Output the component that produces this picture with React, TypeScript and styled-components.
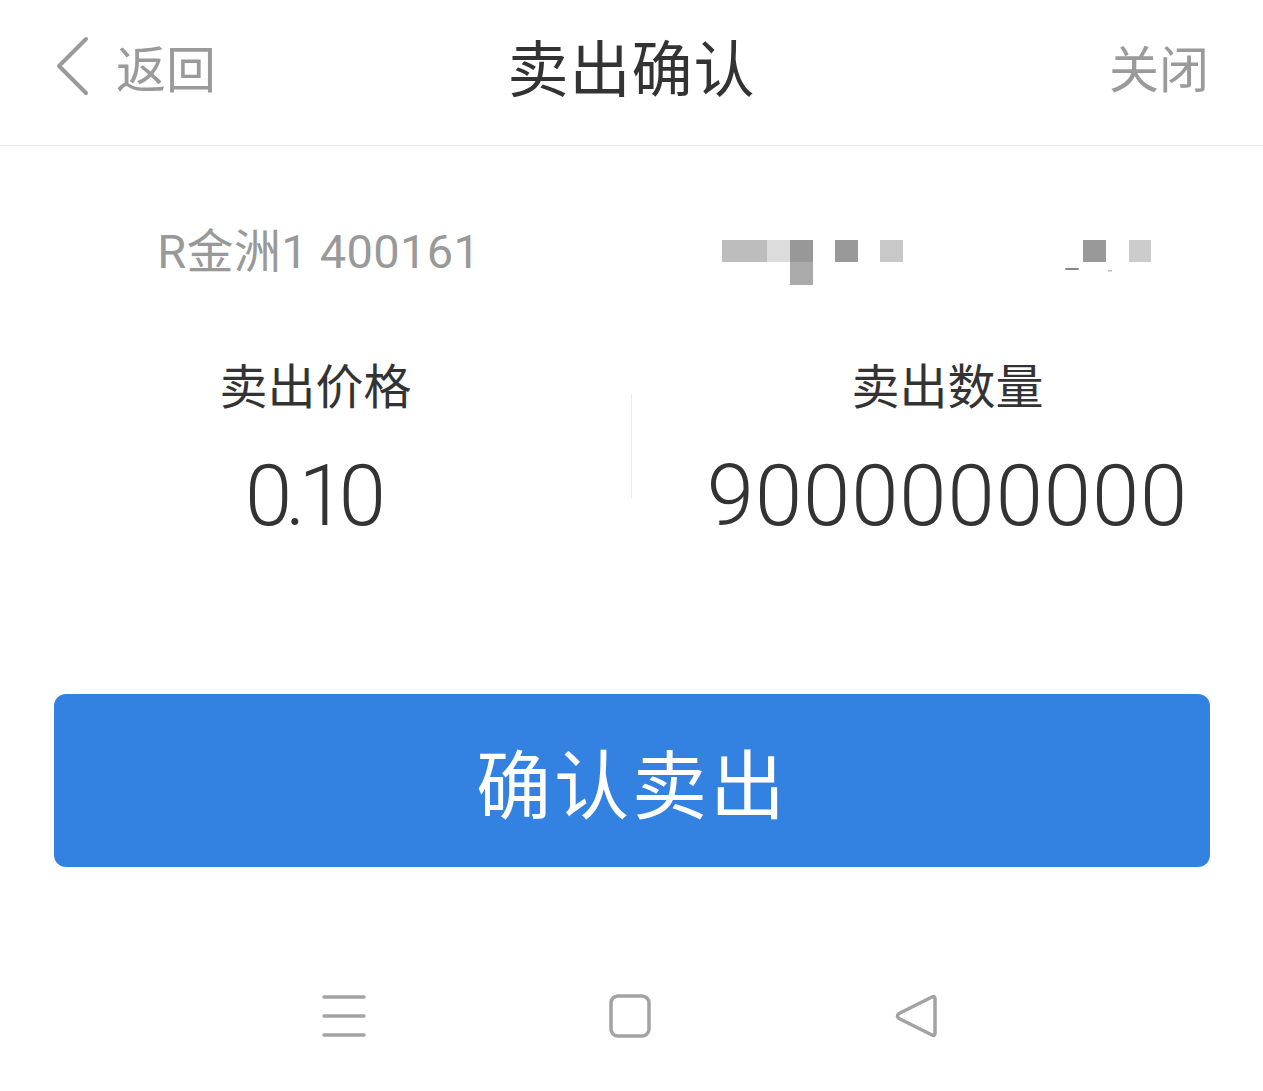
import React from "react";
import styled, { createGlobalStyle } from "styled-components";

const GlobalStyle = createGlobalStyle`
  html, body {
    margin: 0;
    padding: 0;
    background: #ffffff;
  }
  body {
    font-family: Roboto, "Noto Sans CJK SC", sans-serif;
  }
`

const Page = styled.div`
  width: 1263px;
  height: 1091px;
  display: flex;
  flex-direction: column;
  background: #fff;
  overflow: hidden;
`

const Header = styled.header`
  height: 146px;
  box-sizing: border-box;
  display: grid;
  grid-template-columns: 1fr auto 1fr;
  align-items: center;
  padding: 0 54px 14px;
  border-bottom: 1px solid #ededed;
`

const BackLink = styled.button`
  display: flex;
  align-items: center;
  gap: 26px;
  border: none;
  background: none;
  padding: 0;
  color: #9a9a9a;
  font-family: Roboto, "Noto Sans CJK SC", sans-serif;
  font-size: 50px;
  justify-self: start;
  cursor: pointer;
`

const Title = styled.h1`
  margin: 0;
  font-size: 61px;
  font-weight: 400;
  color: #333;
  letter-spacing: 1px;
`

const CloseLink = styled.button`
  justify-self: end;
  border: none;
  background: none;
  padding: 0;
  color: #9a9a9a;
  font-family: Roboto, "Noto Sans CJK SC", sans-serif;
  font-size: 50px;
  cursor: pointer;
`

const InfoRow = styled.div`
  display: grid;
  grid-template-columns: 1fr 1fr;
  height: 192px;
  align-items: center;
`

const StockName = styled.div`
  text-align: center;
  font-size: 47px;
  color: #999;
  letter-spacing: 0.3px;
  padding-top: 10px;
  padding-left: 6px;
`

const MosaicCell = styled.div`
  display: flex;
  align-items: center;
  padding-left: 90px;
  padding-top: 46px;
`

const Columns = styled.div`
  display: grid;
  grid-template-columns: 1fr 1px 1fr;
  align-items: center;
  height: 215px;
`

const Column = styled.div`
  display: flex;
  flex-direction: column;
  align-items: center;
  gap: 28px;
  padding-top: 12px;
`

const Divider = styled.div`
  width: 1px;
  height: 105px;
  background: #ececec;
  margin-top: 2px;
`

const Label = styled.div`
  font-size: 48px;
  color: #333;
  line-height: 60px;
`

const Value = styled.div<{ $tight?: boolean }>`
  font-size: 85px;
  font-weight: 300;
  color: #333;
  line-height: 100px;
  letter-spacing: ${({ $tight }) => ($tight ? "-7px" : "1px")};
  margin-right: ${({ $tight }) => ($tight ? "7px" : "0")};
`

const ButtonWrap = styled.div`
  padding: 141px 53px 0 54px;
`

const ConfirmButton = styled.button`
  width: 100%;
  height: 173px;
  border: none;
  border-radius: 12px;
  background: #3381e0;
  color: #fff;
  font-family: Roboto, "Noto Sans CJK SC", sans-serif;
  font-size: 75px;
  letter-spacing: 3px;
  padding-top: 0;
  cursor: pointer;
`

const NavBar = styled.nav`
  margin-top: auto;
  height: 150px;
  display: flex;
  justify-content: center;
  align-items: center;
  gap: 242px;
  padding-right: 4px;
`

const NavIcon = styled.svg`
  display: block;
`

const Chevron = () => (
  <svg width="36" height="60" viewBox="0 0 36 60">
    <path d="M32 3 L5 30 L32 57" fill="none" stroke="#9a9a9a" strokeWidth="4" strokeLinecap="round" strokeLinejoin="round" />
  </svg>
)

// pixelated (mosaic) account number
const Mosaic = () => (
  <svg width="440" height="50" viewBox="0 0 440 50">
    <rect x="0" y="0" width="45" height="22" fill="#bdbdbd" />
    <rect x="45" y="0" width="23" height="22" fill="#dcdcdc" />
    <rect x="68" y="0" width="23" height="22" fill="#989898" />
    <rect x="68" y="22" width="23" height="23" fill="#aaaaaa" />
    <rect x="113" y="0" width="23" height="22" fill="#999999" />
    <rect x="158" y="0" width="23" height="22" fill="#c8c8c8" />
    <rect x="361" y="0" width="23" height="22" fill="#999999" />
    <rect x="407" y="0" width="22" height="22" fill="#cccccc" />
    <rect x="343" y="28" width="14" height="2" rx="1" fill="#888" />
    <rect x="386" y="30" width="4" height="1.5" fill="#bbb" />
  </svg>
)

const App = () => {
  return (
    <>
      <GlobalStyle />
      <Page>
        <Header>
          <BackLink>
            <Chevron />
            <span>返回</span>
          </BackLink>
          <Title>卖出确认</Title>
          <CloseLink>关闭</CloseLink>
        </Header>

        <InfoRow>
          <StockName>R金洲1 400161</StockName>
          <MosaicCell>
            <Mosaic />
          </MosaicCell>
        </InfoRow>

        <Columns>
          <Column>
            <Label>卖出价格</Label>
            <Value $tight>0.10</Value>
          </Column>
          <Divider />
          <Column>
            <Label>卖出数量</Label>
            <Value>9000000000</Value>
          </Column>
        </Columns>

        <ButtonWrap>
          <ConfirmButton>确认卖出</ConfirmButton>
        </ButtonWrap>

        <NavBar>
          <NavIcon width="44" height="44" viewBox="0 0 44 44">
            <g stroke="#a3a3a3" strokeWidth="3.5" strokeLinecap="round">
              <line x1="2" y1="3" x2="42" y2="3" />
              <line x1="2" y1="22" x2="42" y2="22" />
              <line x1="2" y1="41" x2="42" y2="41" />
            </g>
          </NavIcon>
          <NavIcon width="44" height="44" viewBox="0 0 44 44">
            <rect x="3" y="2" width="38" height="40" rx="7" fill="none" stroke="#a3a3a3" strokeWidth="3.5" />
          </NavIcon>
          <NavIcon width="44" height="44" viewBox="0 0 44 44">
            <path d="M38 3 Q41 1.5 41 5 L41 39 Q41 42.5 38 41 L5 24.5 Q2 22 5 19.5 Z" fill="none" stroke="#a3a3a3" strokeWidth="3.5" strokeLinejoin="round" />
          </NavIcon>
        </NavBar>
      </Page>
    </>
  )
}

export default App
